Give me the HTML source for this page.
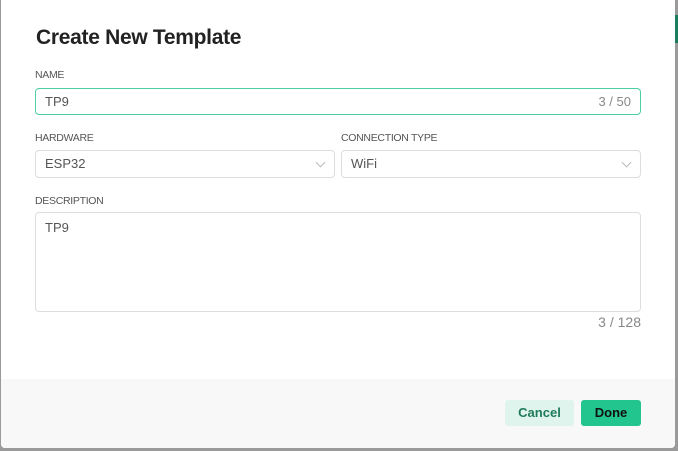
<!DOCTYPE html>
<html><head><style>
*{box-sizing:border-box;margin:0;padding:0}
body{width:678px;height:451px;background:#9a9a9a;position:relative;overflow:hidden;font-family:"Liberation Sans",Arial,sans-serif}
.modal{position:absolute;left:1px;top:0;width:674px;height:448px;background:#fff;border-radius:0 0 4px 4px;overflow:hidden}
.g{position:absolute;left:675px;top:15px;width:3px;height:28px;background:#1a7d5e}
h1{position:absolute;left:35px;top:26px;font-size:21px;font-weight:bold;color:#222;letter-spacing:-0.3px}
.lbl{position:absolute;font-size:10.5px;color:#555;letter-spacing:-0.3px}
.box{position:absolute;border:1px solid #ddd;border-radius:4px;font-size:13px;color:#555;padding-left:9px}
.cnt{position:absolute;font-size:13px;color:#888}
.chev{position:absolute;right:10px;top:8px;width:7px;height:7px;border-right:1px solid #bbb;border-bottom:1px solid #bbb;transform:rotate(45deg)}
.foot{position:absolute;left:0;top:379px;width:674px;height:69px;background:#f8f8f8}
.btn{position:absolute;top:21px;height:26px;border-radius:3px;font-size:13px;font-weight:bold;text-align:center;line-height:26px}
</style></head><body>
<div class="g"></div>
<div class="modal">
<h1>Create New Template</h1>
<div class="lbl" style="left:34px;top:69px">NAME</div>
<div class="box" style="left:34px;top:88px;width:606px;height:27px;border-color:#4ccf9e;line-height:25px">TP9<span class="cnt" style="right:9px;top:0">3 / 50</span></div>
<div class="lbl" style="left:34px;top:132px">HARDWARE</div>
<div class="box" style="left:34px;top:150px;width:300px;height:28px;line-height:26px">ESP32<div class="chev"></div></div>
<div class="lbl" style="left:340px;top:132px">CONNECTION TYPE</div>
<div class="box" style="left:340px;top:150px;width:300px;height:28px;line-height:26px">WiFi<div class="chev"></div></div>
<div class="lbl" style="left:34px;top:195px">DESCRIPTION</div>
<div class="box" style="left:34px;top:212px;width:606px;height:100px;padding-top:7px">TP9</div>
<div class="cnt" style="left:592px;top:314px;font-size:14px;width:48px;text-align:right">3 / 128</div>
<div class="foot">
<div class="btn" style="left:504px;width:69px;background:#dff4ec;color:#1f7a5a">Cancel</div>
<div class="btn" style="left:580px;width:60px;background:#22c58e;color:#111">Done</div>
</div>
</div>
</body></html>
